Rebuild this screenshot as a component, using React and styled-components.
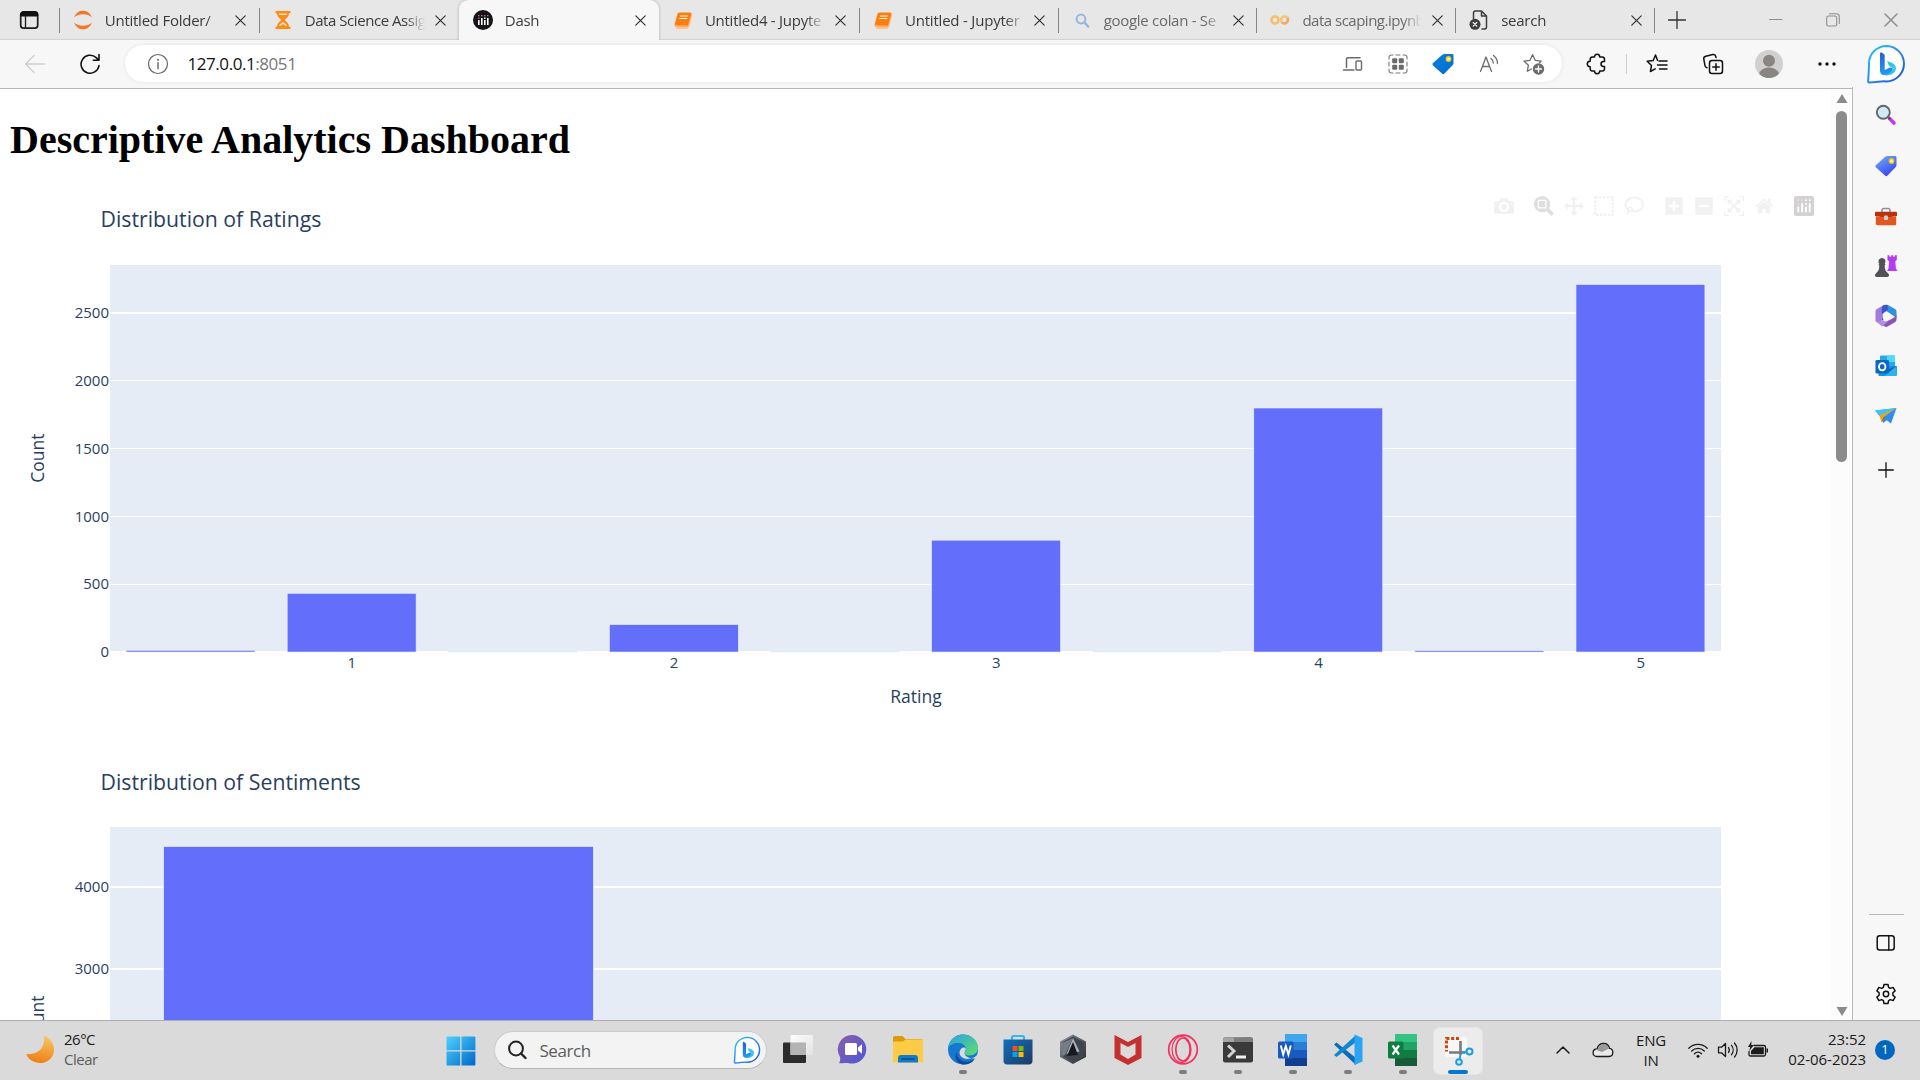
import React from "react";
import styled, { createGlobalStyle } from "styled-components";

const UI = `"Open Sans", "Noto Sans", sans-serif`;

const Global = createGlobalStyle`
  * { box-sizing: border-box; }
  html, body { margin: 0; padding: 0; overflow: hidden; background: #fff; }
`;

const Screen = styled.div`
  width: 1920px;
  height: 1080px;
  display: flex;
  flex-direction: column;
  overflow: hidden;
  font-family: ${UI};
  color: #1b1b1b;
`;

const Slot = styled.div`
  display: flex;
  align-items: center;
  justify-content: center;
  flex: none;
  width: ${(p) => p.$w}px;
  height: 100%;
  margin-left: ${(p) => p.$ml || 0}px;
`;

/* ---------- tab strip ---------- */

const TabStrip = styled.div`
  height: 40px;
  flex: none;
  display: flex;
  background: #e7e7e7;
  box-shadow: inset 0 -2px 1px -1px #d2d2d2;
`;

const Tab = styled.div`
  width: ${(p) => p.$w}px;
  flex: none;
  height: 40px;
  display: flex;
  align-items: center;
  padding: 0 8px 1px 14px;
  background: ${(p) => (p.$active ? "#f7f7f7" : "transparent")};
  border-radius: ${(p) => (p.$active ? "9px 9px 0 0" : "0")};
  box-shadow: ${(p) => (p.$active ? "0 0 3px rgba(0,0,0,.28)" : "none")};
  clip-path: inset(0 -4px 0 -4px);
`;

const TabTitle = styled.span`
  width: 120px;
  flex: none;
  margin-left: 12px;
  font-size: 15px;
  line-height: 20px;
  letter-spacing: ${(p) => p.$ls}px;
  white-space: nowrap;
  color: ${(p) => (p.$dim ? "#6a6a6a" : "#3b3b3b")};
  mask-image: linear-gradient(90deg, #000 84%, transparent 100%);
`;

const TabClose = styled.span`
  width: 20px;
  height: 20px;
  margin: 1px 0 0 ${(p) => p.$ml}px;
  display: flex;
  align-items: center;
  justify-content: center;
`;

const Divider = styled.i`
  width: 1px;
  height: 25px;
  margin: 8px -1px 0 0;
  background: ${(p) => (p.$hidden ? "transparent" : "#848484")};
`;

/* ---------- browser body ---------- */

const Browser = styled.div`
  flex: 1;
  min-height: 0;
  display: flex;
`;

const Main = styled.div`
  width: 1853px;
  display: flex;
  flex-direction: column;
  border-right: 1px solid #b9b9b9;
  border-image: linear-gradient(#f7f7f7 48px, #b9b9b9 48px) 1;
`;

const Toolbar = styled.div`
  height: 49px;
  flex: none;
  display: flex;
  align-items: center;
  padding-bottom: 1px;
  background: #f7f7f7;
  border-bottom: 1px solid #b7b7b7;
`;

const AddressBar = styled.div`
  width: 1437px;
  height: 37px;
  margin-left: 15px;
  padding: 0 5px 0 20px;
  border-radius: 19px;
  background: #fff;
  box-shadow: 0 0 4px rgba(0, 0, 0, 0.08);
  display: flex;
  align-items: center;
`;

const Url = styled.span`
  flex: 1;
  margin-left: 17.5px;
  font-size: 17px;
  letter-spacing: -0.44px;
  color: #777;
  b {
    font-weight: 400;
    color: #111;
  }
`;

const ToolDivider = styled.i`
  width: 1.5px;
  height: 20px;
  margin-left: 7px;
  background: #cfcfcf;
`;

const Viewport = styled.div`
  flex: 1;
  min-height: 0;
  display: flex;
`;

const Page = styled.div`
  width: 1831px;
  overflow: hidden;
  background: #fff;
  padding-left: 10px;
`;

const Heading = styled.h1`
  margin: 29px 0 0;
  height: 72px;
  font: 700 40px/44.3px "Liberation Serif", serif;
  color: #000;
`;

const Figure = styled.div`
  position: relative;
  width: 1811px;
  height: 562px;
  svg {
    display: block;
    overflow: visible;
  }
`;

const Modebar = styled.div`
  position: absolute;
  top: 6px;
  right: 2px;
  display: flex;
  height: 20px;
`;

const ModeButton = styled.span`
  width: 30px;
  display: flex;
  justify-content: center;
  margin-left: ${(p) => (p.$gap ? 10 : 0)}px;
  color: ${(p) => (p.$on ? "#dedede" : "#f1f1f1")};
`;

const Scrollbar = styled.div`
  width: 21px;
  background: #fcfcfc;
  display: flex;
  flex-direction: column;
  align-items: center;
  padding: 5px 0 4px;
`;

const Thumb = styled.div`
  width: 11px;
  height: 351px;
  border-radius: 6px;
  background: #8b8b8b;
  margin: 8px 0 auto;
`;

/* ---------- sidebar ---------- */

const Sidebar = styled.div`
  width: 67px;
  background: #f7f7f7;
  display: flex;
  flex-direction: column;
  align-items: center;
  padding: 4px 1px 0 0;
`;

const SideItem = styled.div`
  height: ${(p) => p.$h || 50}px;
  margin-top: ${(p) => p.$mt || 0}px;
  display: flex;
  align-items: center;
  justify-content: center;
`;

const SideRule = styled.div`
  width: 35px;
  height: 1px;
  background: #b9b9b9;
  margin: auto 0 3px;
`;

/* ---------- taskbar ---------- */

const Taskbar = styled.div`
  height: 60px;
  flex: none;
  display: flex;
  background: #dadada;
  border-top: 1px solid #adadad;
`;

const Weather = styled.div`
  width: 433px;
  display: flex;
  align-items: center;
  padding: 0 0 3px 26px;
  gap: 10px;
`;

const Lines = styled.div`
  display: flex;
  flex-direction: column;
  align-items: ${(p) => p.$align || "flex-start"};
  justify-content: center;
  width: ${(p) => (p.$w ? p.$w + "px" : "auto")};
  padding-bottom: ${(p) => p.$pb || 0}px;
  font-size: 15px;
  line-height: 20px;
  letter-spacing: ${(p) => p.$ls}px;
  white-space: nowrap;
`;

const Muted = styled.span`
  color: #5d5d5d;
`;

const SearchBox = styled.div`
  width: 273px;
  height: 38px;
  margin: 10px 3px 0 5px;
  border-radius: 19px;
  background: #f3f3f3;
  border: 1px solid #cbcbcb;
  border-bottom-color: #b5b5b5;
  display: flex;
  align-items: center;
  padding: 0 5px 0 12px;
  font-size: 17px;
  letter-spacing: -0.45px;
  color: #5c5c5c;
  span {
    flex: 1;
    padding-left: 12.5px;
  }
`;

const AppSlot = styled.div`
  width: 55px;
  display: flex;
  flex-direction: column;
  align-items: center;
  padding-top: 7px;
`;

const AppTile = styled.div`
  width: 48px;
  height: 46px;
  border-radius: 6px;
  background: ${(p) => (p.$active ? "#ececec" : "transparent")};
  box-shadow: ${(p) => (p.$active ? "0 0 0 1px #e4e4e4" : "none")};
  display: flex;
  flex-direction: column;
  align-items: center;
  padding-top: 6px;
`;

const Indicator = styled.i`
  width: ${(p) => (p.$active ? 20 : 8)}px;
  height: 4px;
  margin-top: 4px;
  border-radius: 2px;
  background: ${(p) => (p.$active ? "#0078d4" : "#7d7d7d")};
`;

const Tray = styled.div`
  display: flex;
  align-items: center;
  margin-left: 58px;
  padding-bottom: 1px;
`;

const Badge = styled.span`
  width: 20px;
  height: 20px;
  margin-left: 9px;
  border-radius: 50%;
  background: #0067c0;
  color: #fff;
  font-size: 13px;
  line-height: 19px;
  text-align: center;
`;

/* ---------- icons ---------- */

const Svg = ({ s = 24, w, h, vb, children, ...rest }) => (
  <svg
    width={w || s}
    height={h || s}
    viewBox={vb || `0 0 ${w || s} ${h || s}`}
    fill="none"
    stroke="none"
    style={{ flex: "none", display: "block" }}
    {...rest}
  >
    {children}
  </svg>
);

const line = (c, sw = 1.4) => ({
  stroke: c,
  strokeWidth: sw,
  strokeLinecap: "round",
  strokeLinejoin: "round",
});

const CloseX = ({ c = "#333", s = 11 }) => (
  <Svg s={s} vb="0 0 11 11"><path d="M.8.8l9.4 9.4M10.2.8L.8 10.2" {...line(c, 1.2)} /></Svg>
);

const BingIcon = ({ s, id }) => (
  <Svg s={s} vb="0 0 40 40">
    <defs>
      <linearGradient id={id + "a"} x1="0" y1="0" x2="1" y2="1">
        <stop offset="0" stopColor="#25c8f5" />
        <stop offset=".5" stopColor="#2a8af0" />
        <stop offset="1" stopColor="#1a50c8" />
      </linearGradient>
      <linearGradient id={id + "b"} x1="0" y1="0" x2="0" y2="1">
        <stop offset="0" stopColor="#2a5be0" />
        <stop offset="1" stopColor="#1f9df0" />
      </linearGradient>
    </defs>
    <path d="M20.5 2A17.5 17.5 0 1 1 20 37.400c-5-.6-9 1-17.500 1.100C1.500 38.500 3 31 3 20A17.500 17.500 0 0 1 20.500 2z" fill="#fff" stroke={`url(#${id}a)`} strokeWidth="2" strokeLinejoin="round" />
    <path d="M21 17l2 5 5 2.500-10 6.500c4 1.500 11.500-1 12-6.500.2-4.500-4.500-6-9-7.500z" fill="#30c5ee" />
    <path d="M14 9.500c0-1 .8-1.300 1.500-1l2 1.200c.9.600 1.200 1.200 1.200 2.200V26l5.300-2.500 3 .5c-1 4-5 7-9 7-2.700 0-4-1.800-4-4.500z" fill={`url(#${id}b)`} />
  </Svg>
);

const tabIcons = {
  jupyter: (
    <Svg s={20}>
      <path d="M1 7.500C3 2.500 6.500.7 10 .7s7 1.800 9 6.800C16.500 5.300 13.500 4.300 10 4.300S3.500 5.300 1 7.500z" fill="#f37726" />
      <path d="M1 12.500C3 17.500 6.500 19.300 10 19.300s7-1.800 9-6.800c-2.500 2.200-5.500 3.200-9 3.200s-6.500-1-9-3.200z" fill="#f37726" />
    </Svg>
  ),
  hourglass: (
    <Svg s={20}>
      <path d="M2.500 1h15v2.200h-15zM2.500 16.800h15V19h-15z" fill="#ff8a14" />
      <path d="M4 3c0 4 3 5.500 4.500 7C7 11.500 4 13 4 17h12c0-4-3-5.500-4.500-7C13 8.500 16 7 16 3z" fill="#ff8a14" />
      <path d="M6 3.600h8c0 .7-.2 1-.4 1.400H6.400C6.200 4.600 6 4.300 6 3.600zM10 12c-2 1.200-3.400 2.200-3.800 4h1l2.800-2 2.800 2h1c-.4-1.800-1.800-2.800-3.800-4z" fill="#ffe9cf" />
    </Svg>
  ),
  dash: (
    <Svg s={20}>
      <circle cx="10" cy="10" r="10" fill="#14151b" />
      <g fill="#fff">
        <rect x="5" y="10" width="1.600" height="5" /><rect x="8" y="8" width="1.600" height="7" />
        <rect x="11" y="10" width="1.600" height="5" /><rect x="14" y="8" width="1.600" height="7" />
        <rect x="11" y="7.500" width="1.600" height="1.400" />
      </g>
      <g fill="#d4617c">
        <rect x="5" y="5" width="1.500" height="1.300" /><rect x="8" y="5" width="1.500" height="1.300" />
        <rect x="11" y="5" width="1.500" height="1.300" /><rect x="14" y="5" width="1.500" height="1.300" /><rect x="5" y="7.500" width="1.500" height="1.300" />
      </g>
    </Svg>
  ),
  book: (
    <Svg s={20}>
      <path d="M6.500 2.500h10.800c1 0 1.500.8 1.200 1.800L15.800 15c-.3 1-1 1.800-2 1.800H4c-2 0-2.700-1.300-2.200-3L4.500 4c.3-1 1-1.500 2-1.500z" fill="#ff7d0a" />
      <path d="M3 15.200c.2.800.8 1 1.500 1h9.500M18.500 5.500l-2.700 10c-.5 1.700-1.200 2.500-2.800 2.500H4" {...line("#ffb778", 1.300)} />
      <path d="M7.500 6h7M6.900 8.500h7" {...line("#fff", 1.200)} />
    </Svg>
  ),
  search: (
    <Svg s={20}>
      <circle cx="9" cy="9" r="4.400" {...line("#8fb9de", 2)} />
      <path d="M12.500 12.500l3.600 4" {...line("#8fb9de", 2.400)} />
    </Svg>
  ),
  colab: (
    <Svg w={20} h={20} vb="0 0 22 22">
      <circle cx="5.500" cy="11" r="3.900" stroke="#f3bf6e" strokeWidth="2.800" />
      <circle cx="16" cy="11" r="3.900" stroke="#f6c77a" strokeWidth="2.800" />
      <path d="M19 8.500a3.900 3.900 0 0 1-5.800 5.100" stroke="#eeaa74" strokeWidth="2.800" />
    </Svg>
  ),
  file: (
    <Svg s={20}>
      <path d="M4.500 9V3c0-1.200.8-2 2-2h6l5 5v11c0 1.200-.8 2-2 2H13M12.500 1v5h5" {...line("#3c3c3c", 1.500)} />
      <circle cx="6" cy="14.300" r="5.500" fill="#3c3c3c" />
      <path d="M4.200 12.500l3.600 3.600M7.800 12.500l-3.600 3.600" {...line("#fff", 1.200)} />
    </Svg>
  ),
};

const Puzzle = () => (
  <Svg s={22}>
    <path d="M6.500 4h2c0-1.500 1-2.700 2.600-2.700S13.700 2.500 13.700 4h2.500c1.400 0 2.300.9 2.300 2.300v2.200h-.8c-1.600 0-2.700 1.100-2.700 2.500s1.100 2.500 2.700 2.500h.8v2.200c0 1.400-.9 2.300-2.300 2.300h-2.500c0 1.500-1 2.700-2.600 2.700S8.500 19.500 8.500 18h-2c-1.400 0-2.300-.9-2.300-2.300v-2c-1.600 0-2.900-1.100-2.900-2.700s1.300-2.700 2.900-2.700v-2C4.200 4.900 5.100 4 6.500 4z" {...line("#111", 1.500)} />
  </Svg>
);

const Tag = ({ a, b, id, s = 22 }) => (
  <Svg s={s} vb="0 0 22 22">
    <defs>
      <linearGradient id={id} x1="0" y1="0" x2=".6" y2="1">
        <stop offset="0" stopColor={a} />
        <stop offset="1" stopColor={b} />
      </linearGradient>
    </defs>
    <path d="M12.500 1H20c1 0 1.500.6 1.500 1.500V10c0 1-.3 1.600-1 2.300l-8 8.300c-.8.800-1.700.8-2.500 0L1 12.500c-.7-.8-.7-1.600 0-2.400L10 2c.7-.7 1.500-1 2.500-1z" fill={`url(#${id})`} />
    <circle cx="16.500" cy="6" r="2.200" fill="#fff3a8" stroke="#f5c518" strokeWidth="1.400" />
  </Svg>
);

/* plotly's glyphs are defined in a y-up font space */
const Glyph = ({ d, w = 1000, top = 850 }) => (
  <Svg s={20} vb={`0 0 ${w} 1000`}>
    <path d={d} transform={`matrix(1 0 0 -1 0 ${top})`} fill="currentColor" />
  </Svg>
);

const modebar = [
  { k: "camera", el: <Glyph d="m500 450c-83 0-150-67-150-150 0-83 67-150 150-150 83 0 150 67 150 150 0 83-67 150-150 150z m400 150h-120c-16 0-34 13-39 29l-31 93c-6 15-23 28-40 28h-340c-16 0-34-13-39-28l-31-94c-6-15-23-28-40-28h-120c-55 0-100-45-100-100v-450c0-55 45-100 100-100h800c55 0 100 45 100 100v450c0 55-45 100-100 100z m-400-550c-138 0-250 112-250 250 0 138 112 250 250 250 138 0 250-112 250-250 0-138-112-250-250-250z m365 380c-19 0-35 16-35 35 0 19 16 35 35 35 19 0 35-16 35-35 0-19-16-35-35-35z" /> },
  { k: "zoom", gap: 1, on: 1, el: <Glyph d="m1000-25l-250 251c40 63 63 138 63 218 0 224-182 406-407 406-224 0-406-182-406-406s183-406 407-406c80 0 155 22 218 62l250-250 125 125z m-812 250l0 438 437 0 0-438-437 0z m62 375l313 0 0-312-313 0 0 312z" /> },
  { k: "pan", el: <Glyph d="m1000 350l-187 188 0-125-250 0 0 250 125 0-188 187-187-187 125 0 0-250-250 0 0 125-188-188 186-187 0 125 252 0 0-250-125 0 187-188 188 188-125 0 0 250 250 0 0-126 187 188z" /> },
  { k: "select", el: <Svg s={20}><rect x="1.200" y="1.200" width="17.600" height="17.600" stroke="currentColor" strokeWidth="2.400" strokeDasharray="2.400 1.400" /></Svg> },
  { k: "lasso", el: <Svg s={20}><path d="M6 14.500C2.500 13 .8 10.500 1.500 7.500 2.500 3.500 7 1.200 11.500 1.500c4.500.3 8 3.500 7.500 7.500-.5 4.500-5.500 7.200-10.500 6" stroke="currentColor" strokeWidth="1.800" /><circle cx="6" cy="13.500" r="2.200" stroke="currentColor" strokeWidth="1.600" /><path d="M4.500 15c-1 1.500-.5 2.500-1.500 4" stroke="currentColor" strokeWidth="1.600" /></Svg> },
  { k: "in", gap: 1, el: <Glyph w={875} d="m1 787l0-875 875 0 0 875-875 0z m687-500l-187 0 0-187-125 0 0 187-188 0 0 125 188 0 0 187 125 0 0-187 187 0 0-125z" /> },
  { k: "out", el: <Glyph w={875} d="m0 788l0-876 875 0 0 876-875 0z m688-500l-500 0 0 125 500 0 0-125z" /> },
  { k: "auto", el: <Glyph d="m250 850l-187 0-63 0 0-62 0-188 63 0 0 188 187 0 0 62z m688 0l-188 0 0-62 188 0 0-188 62 0 0 188 0 62-62 0z m-875-938l0 188-63 0 0-188 0-62 63 0 187 0 0 62-187 0z m875 188l0-188-188 0 0-62 188 0 62 0 0 62 0 188-62 0z m-125 188l-1 0-93-94-156 156 156 156 92-93 2 0 0 250-250 0 0-2 93-92-156-156-156 156 94 92 0 2-250 0 0-250 0 0 93 93 157-156-157-156-93 94 0 0 0-250 250 0 0 0-94 93 156 157 156-157-93-93 0 0 250 0 0 250z" /> },
  { k: "home", el: <Glyph w={928.6} d="m786 296v-267q0-15-11-26t-25-10h-214v214h-143v-214h-214q-15 0-25 10t-11 26v267q0 1 0 2t0 2l321 264 321-264q1-1 1-4z m124 39l-34-41q-5-5-12-6h-2q-7 0-12 3l-386 322-386-322q-7-4-13-4-7 2-12 7l-35 41q-4 5-3 13t6 12l401 334q18 15 42 15t43-15l136-114v109q0 8 5 13t13 5h107q8 0 13-5t5-13v-227l122-102q5-5 6-12t-4-13z" /> },
  {
    k: "logo", gap: 1, el: (
      <Svg s={20}>
        <rect width="20" height="20" rx="2.800" fill="#d2d2d2" />
        <g fill="#fff">
          <rect x="3.300" y="10.500" width="1.900" height="6" rx=".9" /><rect x="7.200" y="7" width="1.900" height="9.500" rx=".9" />
          <rect x="11" y="10.500" width="1.900" height="6" rx=".9" /><rect x="14.800" y="7" width="1.900" height="9.500" rx=".9" />
          <circle cx="12" cy="8" r="1" /><circle cx="12" cy="4.300" r="1" /><circle cx="15.800" cy="4.300" r="1" />
        </g>
        <g fill="#f3d5de"><circle cx="4.200" cy="4.300" r="1" /><circle cx="8.100" cy="4.300" r="1" /><circle cx="4.200" cy="8" r="1" /></g>
      </Svg>
    ),
  },
];

/* ---------- charts ---------- */

const ChartText = styled.text`
  font-family: "Open Sans", verdana, arial, sans-serif;
  font-size: ${(p) => p.$size}px;
  fill: #2a3f5f;
`;

function Chart({ title, titleY, grid, bars, xTicks, xLabel, yLabel }) {
  return (
    <svg width="1811" height="562">
      <rect x="100" y="75" width="1611" height="386" fill="#e5ecf6" />
      {grid.map((g) => (
        <React.Fragment key={g.label}>
          {g.h && <rect x="100" y={g.y} width="1611" height={g.h} fill="#fff" />}
          <ChartText $size={15} x="99" y={g.ty} textAnchor="end">{g.label}</ChartText>
        </React.Fragment>
      ))}
      {bars.map(([x, y, w], i) => (
        <rect key={i} x={x} y={y} width={w} height={462 - y} fill="#636efa" stroke="#e5ecf6" strokeWidth=".625" />
      ))}
      {xTicks.map((t, i) => (
        <ChartText key={t} $size={15} x={341.900 + i * 322.200} y="478" textAnchor="middle">{t}</ChartText>
      ))}
      <ChartText $size={21.25} x="90.500" y={titleY}>{title}</ChartText>
      {xLabel && <ChartText $size={17.5} x="906" y="513.300" textAnchor="middle">{xLabel}</ChartText>}
      <ChartText $size={17.5} transform="translate(33.700 268.200) rotate(-90)" textAnchor="middle">{yLabel}</ChartText>
    </svg>
  );
}

const ratings = {
  title: "Distribution of Ratings",
  titleY: 36.5,
  grid: [
    { label: "0", y: 461, h: null, ty: 466.5 },
    { label: "500", y: 394, h: 1, ty: 399 },
    { label: "1000", y: 326, h: 1, ty: 331.5 },
    { label: "1500", y: 258, h: 1, ty: 264 },
    { label: "2000", y: 190, h: 1, ty: 195.5 },
    { label: "2500", y: 122, h: 2, ty: 128 },
  ],
  bars: [
    [116.1, 460.3, 128.9], [277.2, 403.3, 128.9], [438.3, 461.8, 128.9], [599.4, 434.6, 128.9],
    [760.5, 461.8, 128.9], [921.6, 350.2, 128.9], [1082.7, 461.8, 128.9], [1243.8, 218, 128.9],
    [1404.9, 460.6, 128.9], [1566, 94.5, 128.9],
  ],
  xTicks: ["1", "2", "3", "4", "5"],
  xLabel: "Rating",
  yLabel: "Count",
};

const sentiments = {
  title: "Distribution of Sentiments",
  titleY: 37.5,
  grid: [
    { label: "4000", y: 134, h: 2, ty: 139.7 },
    { label: "3000", y: 216, h: 2, ty: 221.7 },
  ],
  bars: [[153.7, 94.6, 429.6]],
  xTicks: [],
  yLabel: "Count",
};

/* ---------- sidebar and taskbar drawings ---------- */

const SideSearch = () => (
  <Svg s={22}>
    <path d="M14.500 14.500l4.500 4.500" {...line("#c239f0", 3.600)} />
    <path d="M12.500 12.500l2 2" {...line("#555", 2)} />
    <circle cx="8.300" cy="8.300" r="6.500" fill="#cfe9fb" stroke="#666" strokeWidth="1.900" />
  </Svg>
);
const Toolbox = () => (
  <Svg w={24} h={20}>
    <path d="M8 5V3.200C8 2 8.600 1.500 9.600 1.500h4.800c1 0 1.600.5 1.600 1.700V5" stroke="#8c8f94" strokeWidth="1.600" />
    <path d="M1 5.500C1 5 1.400 4.800 2 4.800h20c.6 0 1 .2 1 .7V9l-9 1.500h-4L1 9z" fill="#b8330c" />
    <path d="M1.800 9.200l8.200 1h4l8.200-1V17c0 .8-.4 1.200-1.200 1.200H3c-.8 0-1.200-.4-1.200-1.200z" fill="#e2561f" />
    <rect x="10" y="8.500" width="4" height="4.500" rx="1" fill="#c9cdd2" />
  </Svg>
);
const Chess = () => (
  <Svg w={24} h={24}>
    <path d="M13.500 1.200h2v1.500h1.700V1.200h2v1.500h1.600V1.200h2V6l-1.500 1.300.6 7.200 1.600 2.500H13l1.500-2.500.6-7.200L13.500 6z" fill="#b43cf2" />
    <path d="M5.500 10C3.500 8 4.700 4 8 4s4.500 4 2.500 6l1 .3-.8 1.500c0 3.500.8 5.200 2.300 6.500l1.800 2c.6 1.200 0 2.700-1.500 2.700H2.700c-1.500 0-2.100-1.500-1.500-2.700l1.800-2c1.500-1.300 2.300-3 2.300-6.500l-.8-1.500z" fill="#505256" />
  </Svg>
);
const M365 = () => (
  <Svg w={24} h={24}>
    <path d="M9 1.500l5-.5 7 4c1 .6 1.500 1.300 1.500 2.500V14l-5-3.500L11 6 7.500 7z" fill="#2f92e0" />
    <path d="M9 1.500L2.800 5C1.700 5.700 1.500 6.500 1.500 7.500v8.700c0 1 .5 1.600 1.300 2L6.500 20l1.300-4V8c0-3 1-5 1.200-6.500z" fill="#a879dd" />
    <path d="M9 1.500C7 4 7.800 8 7.800 16l1.400 1 .3-8L14 6l-.5-5c-1.600-.4-3.100-.4-4.500.5z" fill="#3a55c5" />
    <path d="M6.500 20l4.300 2.500c1 .6 1.800.6 2.800 0l7.200-4.300c1.200-.8 1.700-1.600 1.700-3V10c0 3-5 5-8 6.500z" fill="#8a55b8" />
    <path d="M1.500 15c0 3 4.500 2.500 7 1.500l3.500 1.300 3-1.300-7 6L2.800 18c-.9-.6-1.300-1.500-1.300-3z" fill="#b78ae6" />
    <path d="M12 8l3.500 2 .2 4L12 16.200 8.500 14v-4z" fill="#f7f7f7" />
  </Svg>
);
const Outlook = () => (
  <Svg w={24} h={24}>
    <rect x="6" y="1.500" width="15" height="13" rx="1" fill="#28a8ea" />
    <path d="M13 1.500h7c.6 0 1 .4 1 1V8h-8z" fill="#50d9ff" />
    <path d="M4.500 12H22.500v9c0 .7-.4 1-1 1h-16c-.7 0-1-.3-1-1z" fill="#1490df" />
    <path d="M22.500 12v9.500L13 16z" fill="#0f5fa8" />
    <path d="M22.500 12l-12 10H21.500c.6 0 1-.3 1-1z" fill="#2bb3f0" />
    <rect x="1.500" y="6" width="13.500" height="13.500" rx="1.300" fill="#0a68c4" />
    <ellipse cx="8.200" cy="12.700" rx="3.200" ry="3.600" stroke="#fff" strokeWidth="1.900" />
  </Svg>
);
const Plane = () => (
  <Svg w={24} h={20}>
    <path d="M1 4.500L22.500 2 17 17.500l-4.200-3.200-3.600 2.700L6.500 11z" fill="#2f8df0" />
    <path d="M1 4.500L22.500 2 6.500 10z" fill="#3fc3f7" />
    <path d="M22.500 2L5.500 9.500l2 7L9.500 11z" fill="#f2a60d" />
    <path d="M7.500 16.500l3.500-4.800-1.500-.7z" fill="#b26b00" />
  </Svg>
);
const Gear = () => (
  <Svg s={22}>
    <path d="M9 1.500h4l.6 2.900 1.700 1 2.800-1 2 3.500-2.200 1.900v2.400l2.200 1.900-2 3.500-2.800-1-1.700 1L13 20.500H9l-.6-2.900-1.700-1-2.800 1-2-3.500 2.200-1.900V9.800L1.900 7.900l2-3.500 2.800 1 1.700-1z" {...line("#111", 1.500)} />
    <circle cx="11" cy="11" r="2.700" stroke="#111" strokeWidth="1.500" />
  </Svg>
);

const Defs = ({ id, a, b }) => (
  <defs>
    <linearGradient id={id} x1="0" y1="0" x2="1" y2="1">
      <stop offset="0" stopColor={a} />
      <stop offset="1" stopColor={b} />
    </linearGradient>
  </defs>
);

const Office = ({ c, dark, mark }) => (
  <Svg s={32}>
    <rect x="8" y="0" width="22" height="8" fill={c[0]} />
    <rect x="8" y="8" width="22" height="8" fill={c[1]} />
    <rect x="8" y="16" width="22" height="8" fill={c[2]} />
    <rect x="8" y="24" width="22" height="8" fill={c[3]} />
    <rect x="1" y="7.500" width="15.500" height="17" rx="1.500" fill={dark} />
    {mark}
  </Svg>
);

const apps = [
  { k: "tasks", el: <Svg s={32}><Defs id="tv" a="#fff" b="#e3e3e3" /><rect x="1" y="8.500" width="23" height="20.500" rx="1" fill="#2c2c2c" /><rect x="8.500" y="1" width="22.500" height="20" rx="1" fill="url(#tv)" opacity=".95" /><rect x="8.500" y="8.500" width="15.500" height="12.500" fill="#b3b3b3" /></Svg> },
  { k: "chat", el: <Svg s={32}><Defs id="ch" a="#8a5fa8" b="#4b57d8" /><path d="M16 1a14.300 14.300 0 1 1-5 28C7 29 4.500 29.500 2 29c1.500-2 1.500-4.500.8-6.500A14.300 14.300 0 0 1 16 1z" fill="url(#ch)" /><rect x="8" y="9" width="12" height="12" rx="1.500" fill="#fff" /><path d="M21 13.500l4-3.200v9.400l-4-3.200z" fill="#fff" /></Svg> },
  { k: "files", el: <Svg s={32}><path d="M1 4c0-1.200.8-2 2-2h7.500l3 3H29c1.200 0 2 .8 2 2v5H1z" fill="#dd9a0a" /><path d="M1 7.500h10l2.500-2H31V28.500H1z" fill="#fdcb45" /><path d="M6 28.500V24c0-1.800 1.200-3 3-3h14c1.800 0 3 1.200 3 3v4.500z" fill="#127bc9" /><path d="M10 25h12" {...line("#0a4f8f", 1.500)} /></Svg> },
  { k: "edge", dot: 1, el: <Svg s={32}><Defs id="eg" a="#2aa0e8" b="#5fe06a" /><circle cx="16" cy="15.500" r="15" fill="#1577cf" /><path d="M1 14C2 6 8 .5 16 .5c8.500 0 15 6 15 13 0 5-4 8-8.500 8-3.500 0-5-1.500-5-2.800 0-1 1.300-1.700 1.300-4C18.800 11 15 9 11 9c-4.500 0-8.500 2-10 5z" fill="url(#eg)" /><path d="M10 18c-.5 7 6 11 12 9.500 2-.5 4-1.500 5.500-3C26 29 20 31 15.500 30.500 9 29.500 7 22 10 18z" fill="#0c4a96" /><path d="M16 13.500c-2 .5-3.500 3-3.500 5 0 4.500 5 7.500 11 6 2-.5 3.500-1 4.800-2l3.200-2v6l-2.500 2c.5-1.300 1-2.500.8-4-2 .3-12.300 0-12.300-5.800 0-1.700 1.300-2.400 1.300-4-.5-1-1.800-1.500-2.800-1.200z" fill="#dadada" /></Svg> },
  { k: "store", el: <Svg s={32}><Defs id="st" a="#0f70bd" b="#213a63" /><path d="M10 7V3.500C10 2.500 10.500 2 11.500 2h9c1 0 1.500.5 1.500 1.500V7" stroke="#35b8ee" strokeWidth="2.200" /><path d="M1.500 5.500h29V27c0 2-1.500 3.500-3.500 3.500H5c-2 0-3.500-1.500-3.500-3.500z" fill="url(#st)" /><rect x="10.500" y="12" width="5" height="5" fill="#f25022" /><rect x="16.500" y="12" width="5" height="5" fill="#7fba00" /><rect x="10.500" y="18" width="5" height="5" fill="#00a4ef" /><rect x="16.500" y="18" width="5" height="5" fill="#ffb900" /></Svg> },
  { k: "armoury", el: <Svg s={32}><Defs id="ar" a="#8f979f" b="#26282b" /><path d="M16 .5l13 7v15.500l-13 7-13-7V7.500z" fill="url(#ar)" /><path d="M16 2.500l11 6v13.500l-11 6-11-6V8.500z" fill="#3f454b" /><path d="M16 4l6.500 13.500L9.500 20z" fill="#a9b2ba" /><path d="M16 8l5 13-11 1z" fill="#17191c" /><path d="M16 4L8 21l-3 1V9z" fill="#757e87" /></Svg> },
  { k: "mcafee", el: <Svg s={32}><path d="M2.500 1L16 8l13.500-7v23L16 31 2.500 24z" fill="#c3302f" /><path d="M8.500 9L16 13l7.500-4v11.500L16 25l-7.500-4.500z" fill="#dadada" /></Svg> },
  { k: "opera", dot: 1, el: <Svg s={32}><circle cx="16" cy="15.500" r="14.300" stroke="#f5305c" strokeWidth="1.700" /><ellipse cx="14.500" cy="15.500" rx="9.500" ry="13" stroke="#f5305c" strokeWidth="1.200" /><ellipse cx="16" cy="15.500" rx="7.200" ry="11.500" stroke="#f5305c" strokeWidth="1.700" /><path d="M19 6c6 3 6 16 0 19" stroke="#f5305c" strokeWidth="1.300" /></Svg> },
  { k: "terminal", dot: 1, el: <Svg s={32}><rect x="1" y="3.500" width="30" height="25" rx="2" fill="#3a3a3a" /><path d="M1 8V5.500c0-1.200.8-2 2-2h18V8z" fill="#a5a5a5" /><path d="M12 3.500h17c1.200 0 2 .8 2 2V8H12z" fill="#7e7e7e" /><path d="M6 11.500l6 5.500-6 6" stroke="#d2d2d2" strokeWidth="3" /><rect x="14" y="21.500" width="10" height="3" fill="#f2f2f2" /></Svg> },
  { k: "word", dot: 1, el: <Office c={["#41a5ee", "#2b7cd3", "#185abd", "#103f91"]} dark="#185abd" mark={<path d="M3.800 11.500L6.200 20.500 8.800 12l2.600 8.500 2.400-9" stroke="#fff" strokeWidth="1.900" />} /> },
  { k: "vscode", dot: 1, el: <Svg s={32}><path d="M2 10.500l2.500-2L24 24v7z" fill="#0c6cb5" /><path d="M2 21l2.500 2L24 8V1z" fill="#1087d2" /><path d="M22.500.5L30.500 4v23.500l-8 3.500z" fill="#2ba4f2" /></Svg> },
  { k: "excel", dot: 1, el: <Office c={["#33c481", "#21a366", "#107c41", "#185c37"]} dark="#107c41" mark={<path d="M5.600 11.500l6.400 9M12 11.500l-6.400 9" stroke="#fff" strokeWidth="2.200" />} /> },
  { k: "snip", active: 1, el: <Svg s={32}><rect x="3" y="3" width="22" height="20" rx="2" fill="#f8f8f8" /><path d="M17 4.500H4.500v13" stroke="#d1410c" strokeWidth="3" strokeDasharray="3 1.800" /><path d="M18.500 7v14M7 18.500h16" stroke="#777b80" strokeWidth="2.600" /><circle cx="27.500" cy="17.500" r="3" stroke="#1b9de2" strokeWidth="2" /><circle cx="17" cy="28" r="2.800" stroke="#1b9de2" strokeWidth="2" /><path d="M20 18.500l4.500-.5M18.500 20.500L17.700 25" stroke="#1b9de2" strokeWidth="1.800" /></Svg> },
];

const tabs = [
  { t: "Untitled Folder/", i: "jupyter", ls: -0.25 },
  { t: "Data Science Assig", i: "hourglass", ls: -0.45, noDiv: true },
  { t: "Dash", i: "dash", ls: -0.3, active: true, noDiv: true },
  { t: "Untitled4 - Jupyte", i: "book", ls: -0.25 },
  { t: "Untitled - Jupyter", i: "book", ls: -0.2 },
  { t: "google colan - Se", i: "search", dim: true, ls: -0.3 },
  { t: "data scaping.ipynb", i: "colab", dim: true, ls: -0.5 },
  { t: "search", i: "file", ls: -0.25 },
];

export default function App() {
  return (
    <Screen>
      <Global />
      <TabStrip>
        <Slot $w={58}>
          <Svg s={20}>
            <rect x="1.700" y="1.800" width="17" height="16.400" rx="3" {...line("#1d1d1d", 1.700)} />
            <path d="M1.700 6V4.800c0-2 1-3 3-3h11c2 0 3 1 3 3V6z" fill="#111" stroke="#111" />
            <path d="M6.500 6v12" {...line("#1d1d1d", 1.300)} />
          </Svg>
        </Slot>
        <Slot $w={0.8} />
        <Divider />
        {tabs.map((tab, n) => (
          <React.Fragment key={n}>
            <Tab $active={tab.active} $w={n < 4 ? 200.1 : 198.8}>
              {tabIcons[tab.i]}
              <TabTitle $dim={tab.dim} $ls={tab.ls}>{tab.t}</TabTitle>
              <TabClose $ml={n < 4 ? 6 : 5}><CloseX /></TabClose>
            </Tab>
            <Divider $hidden={tab.noDiv} />
          </React.Fragment>
        ))}
        <Slot $w={46}>
          <Svg s={18}><path d="M9 .5v17M.5 9h17" {...line("#333", 1.300)} /></Svg>
        </Slot>
        <Slot $w={58} $ml={47}>
          <Svg s={14}><path d="M.5 6.500h12.500" {...line("#8e8e8e", 1.100)} /></Svg>
        </Slot>
        <Slot $w={57}>
          <Svg s={14}>
            <rect x=".7" y="3" width="10" height="10" rx="1.800" {...line("#8e8e8e", 1.100)} />
            <path d="M3.500.7h7c1.700 0 2.800 1 2.800 2.800v7" {...line("#8e8e8e", 1.100)} />
          </Svg>
        </Slot>
        <Slot $w={58}><CloseX c="#8e8e8e" s={14} /></Slot>
      </TabStrip>

      <Browser>
        <Main>
          <Toolbar>
            <Slot $w={70}><Svg s={22}><path d="M20.500 11H1.500M10 2.500L1.500 11l8.500 8.500" {...line("#cfcfcf", 1.300)} /></Svg></Slot>
            <Slot $w={40}>
              <Svg s={22}><path d="M20 12.500A9 9 0 1 1 17.200 4.600L19.500 7M20 1.500V7.200h-5.700" {...line("#111", 1.600)} /></Svg>
            </Slot>
            <AddressBar>
              <Slot $w={25}>
                <Svg s={22}>
                  <circle cx="11" cy="11" r="9.500" {...line("#666", 1.200)} />
                  <path d="M11 9.800v6" {...line("#666", 1.400)} />
                  <circle cx="11" cy="6.700" r="1" fill="#666" />
                </Svg>
              </Slot>
              <Url><b>127.0.0.1</b>:8051</Url>
              <Slot $w={45.25}>
                <Svg w={22} h={18}>
                  <path d="M4.500 12.500V4c0-.8.400-1.200 1.200-1.200H18M1.500 15h10.500" {...line("#6b6b6b", 1.500)} />
                  <rect x="14" y="6" width="5.500" height="9" rx="1" {...line("#6b6b6b", 1.400)} />
                </Svg>
              </Slot>
              <Slot $w={45.25}>
                <Svg s={20}>
                  <path d="M1 5V3.500C1 2 2 1 3.500 1H5M15 1h1.500C18 1 19 2 19 3.500V5M19 15v1.500c0 1.500-1 2.500-2.500 2.500H15M5 19H3.500C2 19 1 18 1 16.500V15M1 8v4M19 8v4M8 1h4M8 19h4" {...line("#7b7b7b", 1.100)} />
                  {[4.200, 10.800].map((x) => [4.200, 10.800].map((y) => <rect key={x + "-" + y} x={x} y={y} width="5" height="5" rx="1" fill="#6b6b6b" />))}
                </Svg>
              </Slot>
              <Slot $w={45.25}><Tag id="tg1" a="#0f7fdc" b="#0071cf" /></Slot>
              <Slot $w={45.25}>
                <Svg s={20}>
                  <path d="M1.500 17.500L7 3l5.500 14.500M3.400 12.500h7.200" {...line("#6b6b6b", 1.300)} />
                  <path d="M12 4.500c1.500 1.200 2.200 2.700 2.300 4.500M14.500 1.500c2.600 1.900 4 4.500 4 8" {...line("#6b6b6b", 1.300)} />
                </Svg>
              </Slot>
              <Slot $w={45.25}>
                <Svg s={22}>
                  <path d="M8.500 16l-4.200 2.300 1.100-6L1 8.100l6-.8L9.600 1.700l2.600 5.600 6 .8L16.500 9.800" {...line("#6b6b6b", 1.300)} />
                  <circle cx="15.500" cy="16" r="5.700" fill="#6b6b6b" />
                  <path d="M15.500 13v6M12.500 16h6" {...line("#fff", 1.300)} />
                </Svg>
              </Slot>
            </AddressBar>
            <Slot $w={44} $ml={13}><Puzzle /></Slot>
            <ToolDivider />
            <Slot $w={56} $ml={2}>
              <Svg s={22}>
                <path d="M11.500 7.300l-2-5.300-2.300 5.500-6 .8 4.300 4.200-1.100 6 4.800-2.600" {...line("#111", 1.500)} />
                <path d="M13 8h8M11.500 12H21M13.500 16H21" {...line("#111", 1.500)} />
              </Svg>
            </Slot>
            <Slot $w={55.5}>
              <Svg s={22}>
                <rect x="7.500" y="7.500" width="13" height="13" rx="2.500" {...line("#111", 1.500)} />
                <path d="M14 10.800v6.400M10.800 14h6.400M5 14.800c-1.300-.2-1.800-1-2-2.100L1.800 6.200C1.500 4.600 2.200 3.600 3.800 3.200l7-1.600c1.500-.3 2.500.3 3 1.800l.3 1.200" {...line("#111", 1.500)} />
              </Svg>
            </Slot>
            <Slot $w={57.5}>
              <Svg s={28}>
                <circle cx="14" cy="14" r="14" fill="#d2d0ce" />
                <circle cx="14" cy="10.800" r="6" fill="#8a8583" />
                <path d="M4.300 24a9.700 6.500 0 0 1 19.400 0A14 14 0 0 1 4.300 24z" fill="#8a8583" />
              </Svg>
            </Slot>
            <Slot $w={50} $ml={4}>
              <Svg w={18} h={4}><circle cx="2" cy="2" r="1.700" fill="#111" /><circle cx="9" cy="2" r="1.700" fill="#111" /><circle cx="16" cy="2" r="1.700" fill="#111" /></Svg>
            </Slot>
          </Toolbar>

          <Viewport>
            <Page>
              <Heading>Descriptive Analytics Dashboard</Heading>
              <Figure>
                <Chart {...ratings} />
                <Modebar>
                  {modebar.map((m) => (
                    <ModeButton key={m.k} $gap={m.gap} $on={m.on}>{m.el}</ModeButton>
                  ))}
                </Modebar>
              </Figure>
              <Figure><Chart {...sentiments} /></Figure>
            </Page>
            <Scrollbar>
              <Svg w={12} h={9}><path d="M6 0l5.500 9H.5z" fill="#8b8b8b" /></Svg>
              <Thumb />
              <Svg w={12} h={9}><path d="M6 9L.5 0h11z" fill="#8b8b8b" /></Svg>
            </Scrollbar>
          </Viewport>
        </Main>

        <Sidebar>
          <SideItem $h={40}><BingIcon s={40} id="bs" /></SideItem>
          <SideItem $mt={6}><SideSearch /></SideItem>
          <SideItem $mt={1}><Tag id="tg2" a="#6fb4fb" b="#3a45ee" /></SideItem>
          <SideItem $mt={1}><Toolbox /></SideItem>
          <SideItem $mt={-1}><Chess /></SideItem>
          <SideItem><M365 /></SideItem>
          <SideItem><Outlook /></SideItem>
          <SideItem><Plane /></SideItem>
          <SideItem $mt={4}><Svg s={16}><path d="M8 .7v14.600M.7 8h14.600" {...line("#111", 1.300)} /></Svg></SideItem>
          <SideRule />
          <SideItem>
            <Svg w={20} h={18}>
              <rect x="1.200" y="1.700" width="17" height="14.300" rx="2.500" {...line("#111", 1.500)} />
              <path d="M12.800 2v14" {...line("#111", 1.400)} />
            </Svg>
          </SideItem>
          <SideItem $h={52}><Gear /></SideItem>
        </Sidebar>
      </Browser>

      <Taskbar>
        <Weather>
          <Svg s={28}>
            <defs>
              <linearGradient id="moon" x1=".6" y1="0" x2=".4" y2="1">
                <stop offset="0" stopColor="#f8c65c" />
                <stop offset="1" stopColor="#ef7d17" />
              </linearGradient>
            </defs>
            <path d="M18 .5c6 2.500 10 8 10 14.500C28 22 22 28 14.500 28 8 28 2 24.500.3 19c8 .5 13.500-2.500 16.200-7.500 1.800-3.500 2-7.500 1.500-11z" fill="url(#moon)" />
          </Svg>
          <Lines $ls={-0.5}><span>26°C</span><Muted>Clear</Muted></Lines>
        </Weather>
        <Slot $w={56}>
          <Svg s={30}>
            <Defs id="win" a="#4fd2ff" b="#0067c8" />
            <path d="M.5 1.500c0-.6.4-1 1-1h12.700v13.700H.5zM15.500.5h12.900c.6 0 1 .4 1 1v12.700H15.500zM.5 15.500h13.700v13.900H1.500c-.6 0-1-.4-1-1zM15.500 15.500h13.900v12.900c0 .6-.4 1-1 1H15.500z" fill="url(#win)" />
          </Svg>
        </Slot>
        <SearchBox>
          <Svg s={20}>
            <circle cx="9" cy="8.500" r="6.900" {...line("#222", 2)} />
            <path d="M14 13.500l4.500 4.500" {...line("#222", 2.400)} />
          </Svg>
          <span>Search</span>
          <BingIcon s={28} id="bt" />
        </SearchBox>
        {apps.map((a) => (
          <AppSlot key={a.k}>
            <AppTile $active={a.active}>
              {a.el}
              {(a.dot || a.active) && <Indicator $active={a.active} />}
            </AppTile>
          </AppSlot>
        ))}
        <Tray>
          <Slot $w={40}><Svg w={14} h={8}><path d="M1 7l6-6 6 6" {...line("#1b1b1b", 1.500)} /></Svg></Slot>
          <Slot $w={40}>
            <Svg w={22} h={16}>
              <path d="M5 14.500c-5.500 0-5-7.500 0-7.500C6 3.500 8.500 1.500 11.500 1.500c3 0 5.300 2 6 4.800 4.500.5 4.500 8.200-.5 8.200z" fill="#e9e9e9" stroke="#1b1b1b" strokeWidth="1.300" />
              <path d="M3 7.500l2.500-.5c1-3.300 3.300-5 6-5 2.800 0 5 2 5.500 4.500L10 10z" fill="#9a9a9a" />
            </Svg>
          </Slot>
          <Lines $w={56} $align="center" $ls={-0.2} $pb={1}><span>ENG</span><span>IN</span></Lines>
          <Slot $w={30} $ml={4}>
            <Svg w={20} h={16}>
              <path d="M.8 6.200a13 13 0 0 1 18.400 0M3.700 9a9 9 0 0 1 12.600 0M6.500 11.700a5 5 0 0 1 7 0" {...line("#1b1b1b", 1.300)} />
              <circle cx="10" cy="14.200" r="1.500" fill="#1b1b1b" />
            </Svg>
          </Slot>
          <Slot $w={30}>
            <Svg w={22} h={18}>
              <path d="M1.500 6.200h3L8.500 2.500v13l-4-3.700h-3z" {...line("#1b1b1b", 1.300)} />
              <path d="M11.500 6.500c1 1.500 1 3.500 0 5M14.500 4.300c2.200 2.700 2.200 6.700 0 9.400M17.500 2c3.500 4 3.500 10 0 14" {...line("#1b1b1b", 1.300)} />
            </Svg>
          </Slot>
          <Slot $w={30}>
            <Svg w={22} h={18}>
              <path d="M7 4.500h10c1 0 1.500.5 1.500 1.500v7.500c0 1-.5 1.500-1.500 1.500H3.500C2.500 15 2 14.500 2 13.500v-3" {...line("#1b1b1b", 1.300)} />
              <path d="M7.500 6.300h9.300v6.900H4V10z" fill="#1b1b1b" />
              <path d="M19.500 7.500h1.500v4h-1.500z" fill="#1b1b1b" />
              <path d="M4.500 0L1 6h2.200L2.300 10 6.800 4H4.300z" fill="#1b1b1b" />
            </Svg>
          </Slot>
          <Lines $w={93} $align="flex-end" $ls={-0.05} $pb={3}><span>23:52</span><span>02-06-2023</span></Lines>
          <Badge>1</Badge>
        </Tray>
      </Taskbar>
    </Screen>
  );
}
